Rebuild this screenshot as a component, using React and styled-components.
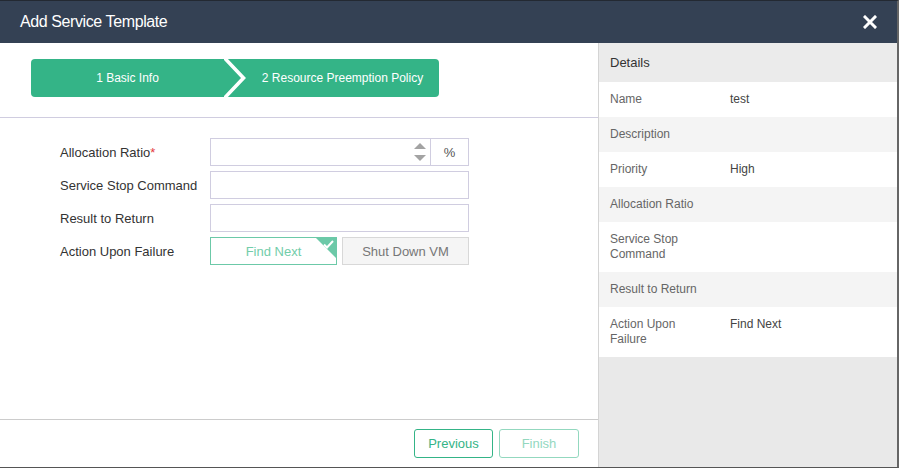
import React from 'react'
import styled, { createGlobalStyle, css } from 'styled-components'

const GlobalStyle = createGlobalStyle`
  html, body {
    margin: 0;
    padding: 0;
    background: #fff;
  }
  body {
    font-family: "Liberation Sans", Arial, sans-serif;
  }
  * {
    box-sizing: border-box;
  }
`

const GREEN = '#34b487'
const LINE = '#d0cde0'

const Dialog = styled.div`
  width: 899px;
  height: 468px;
  display: flex;
  flex-direction: column;
  border-top: 1px solid #232932;
  border-right: 2px solid #666;
  border-bottom: 1px solid #555;
  overflow: hidden;
`
const Header = styled.div`
  flex: none;
  height: 42px;
  padding: 0 20px;
  display: flex;
  align-items: center;
  justify-content: space-between;
  background: #344154;
`
const Title = styled.h1`
  margin: 0;
  font-size: 16px;
  font-weight: normal;
  letter-spacing: -0.4px;
  color: #fff;
`
const Close = styled.button`
  width: 14px;
  height: 14px;
  padding: 0;
  border: 0;
  background: none;
  cursor: pointer;
  display: flex;

  svg {
    display: block;
  }
`
const Body = styled.div`
  flex: 1;
  min-height: 0;
  display: flex;
`
const Main = styled.div`
  width: 598px;
  display: flex;
  flex-direction: column;
`
const StepsBar = styled.div`
  flex: none;
  padding: 16px 0 20px 31px;
  border-bottom: 1px solid ${LINE};
`
const Steps = styled.div`
  width: 408px;
  height: 38px;
  display: flex;
  background: ${GREEN};
  border-radius: 4px;
  overflow: hidden;
`
const Step = styled.div`
  flex: 1;
  display: flex;
  align-items: center;
  justify-content: center;
  font-size: 12px;
  color: #fff;
`
const Chevron = styled.svg`
  flex: none;
  display: block;
`
const Form = styled.div`
  flex: 1;
  padding: 20px 0 0 60px;
  display: grid;
  grid-template-columns: 150px 259px;
  grid-auto-rows: 28px;
  row-gap: 5px;
  align-content: start;
  align-items: center;
`
const Label = styled.label`
  font-size: 13px;
  color: #333;
`
const Required = styled.span`
  color: #e4393c;
`
const InputGroup = styled.div`
  height: 28px;
  display: flex;
`
const NumberBox = styled.div`
  flex: 1;
  border: 1px solid ${LINE};
  display: flex;
  align-items: center;
  justify-content: flex-end;
  padding-right: 4px;
`
const Spinner = styled.div`
  display: flex;
  flex-direction: column;
  gap: 6px;
`
const Arrow = styled.span`
  width: 0;
  height: 0;
  border-left: 6px solid transparent;
  border-right: 6px solid transparent;
  ${(p) =>
    p.$up
      ? css`border-bottom: 6px solid #a3a3a3;`
      : css`border-top: 6px solid #a3a3a3;`}
`
const Addon = styled.div`
  width: 38px;
  border: 1px solid ${LINE};
  border-left: none;
  display: flex;
  align-items: center;
  justify-content: center;
  font-size: 13px;
  color: #555;
`
const TextInput = styled.input`
  width: 100%;
  height: 28px;
  border: 1px solid ${LINE};
  outline: none;
  font: inherit;
`
const ChoiceRow = styled.div`
  height: 28px;
  display: flex;
  gap: 5px;
`
const Choice = styled.button`
  position: relative;
  flex: 1;
  padding: 0;
  font-family: inherit;
  font-size: 13px;
  cursor: pointer;
  ${(p) =>
    p.$active
      ? css`
          border: 1px solid #6cc9a8;
          background: #fff;
          color: #72cdaa;
        `
      : css`
          border: 1px solid #d8d8d8;
          background: #f5f5f5;
          color: #777;
        `}
`
const Corner = styled.span`
  position: absolute;
  top: 0;
  right: 0;
  width: 0;
  height: 0;
  border-top: 20px solid #6cc9a8;
  border-left: 20px solid transparent;
`
const Tick = styled.svg`
  position: absolute;
  top: 2px;
  right: 2px;
  display: block;
`
const Footer = styled.div`
  flex: none;
  height: 48px;
  padding: 9px 19px 9px 0;
  border-top: 1px solid #cccccc;
  display: flex;
  justify-content: flex-end;
  gap: 6px;
`
const FooterButton = styled.button`
  width: ${(p) => p.$w}px;
  height: 29px;
  padding: 0;
  border-radius: 3px;
  background: #fff;
  font-family: inherit;
  font-size: 13px;
  cursor: pointer;
  border: 1px solid ${(p) => (p.$disabled ? '#93d8bf' : GREEN)};
  color: ${(p) => (p.$disabled ? '#93d8bf' : GREEN)};
`
const Side = styled.div`
  flex: 1;
  background: #e9e9e9;
  border-left: 1px solid #d4d4d4;
`
const SideHeader = styled.div`
  height: 39px;
  padding-left: 11px;
  display: flex;
  align-items: center;
  background: #ebebeb;
  font-size: 13px;
  color: #333;
`
const DetailRow = styled.div`
  display: grid;
  grid-template-columns: 120px 1fr;
  padding: 10px 11px;
  line-height: 15px;
  font-size: 12px;
  background: ${(p) => (p.$alt ? '#f4f4f4' : '#fff')};
`
const DetailLabel = styled.div`
  padding-right: 22px;
  color: #666;
`
const DetailValue = styled.div`
  color: #444;
`

const details = [
  ['Name', 'test'],
  ['Description', ''],
  ['Priority', 'High'],
  ['Allocation Ratio', ''],
  ['Service Stop Command', ''],
  ['Result to Return', ''],
  ['Action Upon Failure', 'Find Next'],
]

const App = () => (
  <>
    <GlobalStyle />
    <Dialog>
      <Header>
        <Title>Add Service Template</Title>
        <Close aria-label="Close">
          <svg width="14" height="14" viewBox="0 0 14 14">
            <path d="M2 2L12 12M12 2L2 12" stroke="#fff" strokeWidth="3" strokeLinecap="square" />
          </svg>
        </Close>
      </Header>
      <Body>
        <Main>
          <StepsBar>
            <Steps>
              <Step>1 Basic Info</Step>
              <Chevron width="22" height="38" viewBox="0 0 22 38">
                <polyline points="0.5,-1 19.5,19 0.5,39" fill="none" stroke="#fff" strokeWidth="3.6" />
              </Chevron>
              <Step>2 Resource Preemption Policy</Step>
            </Steps>
          </StepsBar>

          <Form>
            <Label>
              Allocation Ratio<Required>*</Required>
            </Label>
            <InputGroup>
              <NumberBox>
                <Spinner>
                  <Arrow $up />
                  <Arrow />
                </Spinner>
              </NumberBox>
              <Addon>%</Addon>
            </InputGroup>

            <Label>Service Stop Command</Label>
            <TextInput />

            <Label>Result to Return</Label>
            <TextInput />

            <Label>Action Upon Failure</Label>
            <ChoiceRow>
              <Choice $active>
                Find Next
                <Corner />
                <Tick width="11" height="9" viewBox="0 0 11 9">
                  <path d="M1 4.5L4 7.5L10 1" fill="none" stroke="#fff" strokeWidth="2" />
                </Tick>
              </Choice>
              <Choice>Shut Down VM</Choice>
            </ChoiceRow>
          </Form>

          <Footer>
            <FooterButton $w={79}>Previous</FooterButton>
            <FooterButton $w={80} $disabled>Finish</FooterButton>
          </Footer>
        </Main>

        <Side>
          <SideHeader>Details</SideHeader>
          {details.map(([label, value], i) => (
            <DetailRow key={label} $alt={i % 2 === 1}>
              <DetailLabel>{label}</DetailLabel>
              <DetailValue>{value}</DetailValue>
            </DetailRow>
          ))}
        </Side>
      </Body>
    </Dialog>
  </>
)

export default App
